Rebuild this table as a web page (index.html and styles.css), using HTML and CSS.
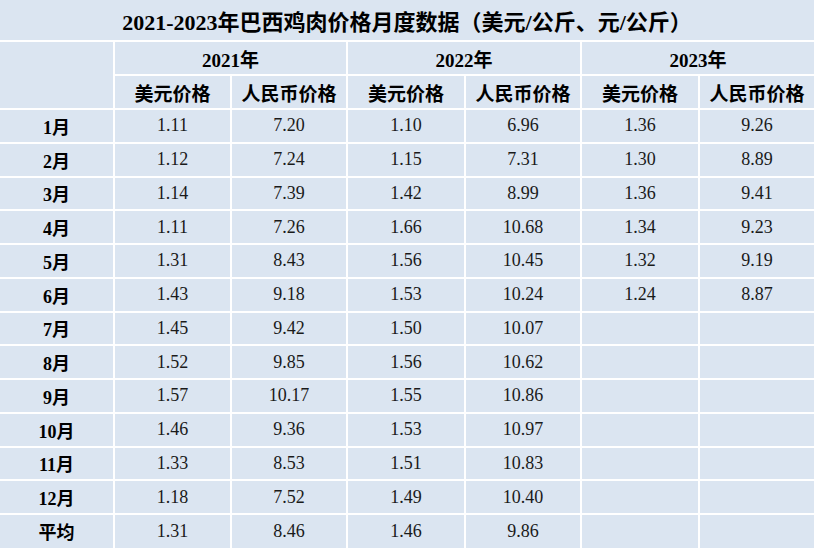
FILE: index.html
```html
<!DOCTYPE html>
<html lang="zh-CN">
<head>
<meta charset="utf-8">
<title>2021-2023年巴西鸡肉价格月度数据</title>
<link rel="stylesheet" href="styles.css">
</head>
<body>
<table class="data">
  <colgroup>
    <col class="c0"><col class="c1"><col class="c2"><col class="c3"><col class="c4"><col class="c5"><col class="c6">
  </colgroup>
  <thead>
    <tr class="title-row"><th colspan="7" class="title">2021-2023年巴西鸡肉价格月度数据（美元/公斤、元/公斤）</th></tr>
    <tr class="head-row">
      <th rowspan="2"></th>
      <th colspan="2">2021年</th>
      <th colspan="2">2022年</th>
      <th colspan="2">2023年</th>
    </tr>
    <tr class="head-row">
      <th>美元价格</th><th>人民币价格</th>
      <th>美元价格</th><th>人民币价格</th>
      <th>美元价格</th><th>人民币价格</th>
    </tr>
  </thead>
  <tbody>
    <tr><th>1月</th><td>1.11</td><td>7.20</td><td>1.10</td><td>6.96</td><td>1.36</td><td>9.26</td></tr>
    <tr><th>2月</th><td>1.12</td><td>7.24</td><td>1.15</td><td>7.31</td><td>1.30</td><td>8.89</td></tr>
    <tr><th>3月</th><td>1.14</td><td>7.39</td><td>1.42</td><td>8.99</td><td>1.36</td><td>9.41</td></tr>
    <tr><th>4月</th><td>1.11</td><td>7.26</td><td>1.66</td><td>10.68</td><td>1.34</td><td>9.23</td></tr>
    <tr><th>5月</th><td>1.31</td><td>8.43</td><td>1.56</td><td>10.45</td><td>1.32</td><td>9.19</td></tr>
    <tr><th>6月</th><td>1.43</td><td>9.18</td><td>1.53</td><td>10.24</td><td>1.24</td><td>8.87</td></tr>
    <tr><th>7月</th><td>1.45</td><td>9.42</td><td>1.50</td><td>10.07</td><td></td><td></td></tr>
    <tr><th>8月</th><td>1.52</td><td>9.85</td><td>1.56</td><td>10.62</td><td></td><td></td></tr>
    <tr><th>9月</th><td>1.57</td><td>10.17</td><td>1.55</td><td>10.86</td><td></td><td></td></tr>
    <tr><th>10月</th><td>1.46</td><td>9.36</td><td>1.53</td><td>10.97</td><td></td><td></td></tr>
    <tr><th>11月</th><td>1.33</td><td>8.53</td><td>1.51</td><td>10.83</td><td></td><td></td></tr>
    <tr><th>12月</th><td>1.18</td><td>7.52</td><td>1.49</td><td>10.40</td><td></td><td></td></tr>
    <tr><th>平均</th><td>1.31</td><td>8.46</td><td>1.46</td><td>9.86</td><td></td><td></td></tr>
  </tbody>
</table>
</body>
</html>
```
FILE: styles.css
```css
html, body {
  margin: 0;
  padding: 0;
  background: #dbe5f1;
}

.data {
  width: 814px;
  table-layout: fixed;
  border-collapse: collapse;
  border-style: hidden;
  background: #dbe5f1;
  font-family: "Liberation Serif", "Noto Sans CJK SC", serif;
  color: #111111;
}

.c0 { width: 114px; }
.c1 { width: 117px; }
.c2 { width: 116px; }
.c3 { width: 118px; }
.c4 { width: 116px; }
.c5 { width: 118px; }
.c6 { width: 115px; }

.data th,
.data td {
  border: 2px solid #ffffff;
  padding: 0;
  text-align: center;
  vertical-align: middle;
  white-space: nowrap;
  overflow: hidden;
}

.title-row { height: 41px; }
.head-row { height: 34px; }
tbody tr { height: 33.75px; }

.data .title {
  font-size: 22px;
  font-weight: bold;
  color: #000000;
}

.head-row th {
  font-size: 19px;
  font-weight: bold;
  color: #000000;
}

tbody th {
  font-size: 18px;
  font-weight: bold;
  color: #000000;
}

tbody td {
  font-size: 18px;
  font-weight: normal;
  color: #1a1a1a;
}
```
